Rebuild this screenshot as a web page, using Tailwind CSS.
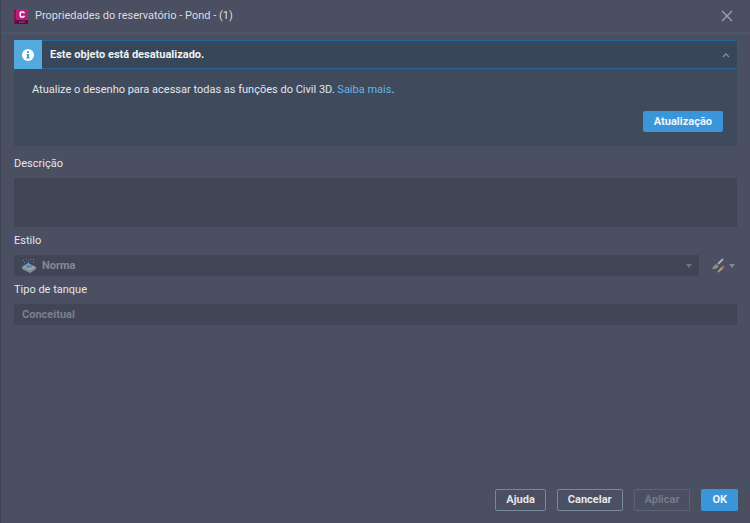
<!DOCTYPE html>
<html lang="pt-BR">

<head>
    <meta charset="UTF-8" />
    <meta name="viewport" content="width=device-width, initial-scale=1.0" />
    <script src="https://cdn.jsdelivr.net/npm/@tailwindcss/browser@4"></script>
    <title>Propriedades do reservatório</title>
</head>

<body class="bg-[#4a4f61] font-[Roboto,'Noto_Sans',sans-serif] text-[11px] leading-4 text-[#e4e6ea]">
    <div class="min-h-screen flex flex-col border-l border-[#3d4251]">
        <!-- title bar -->
        <header class="h-[34px] pl-[13px] pr-[17px] flex items-center border-b-2 border-[#4c5868]">
            <svg class="w-[14px] h-[15px] mr-[7px]" viewBox="0 0 14 15">
                <path d="M0 1l2-1v12l-2 2z" fill="#7c1553" />
                <path d="M2 0h12v11H2z" fill="#bd1a80" />
                <path d="M0 14l2-3h12v4H1z" fill="#5e0c40" />
                <path d="M10 4.2V3.7L9.2 3H7.1L6.3 3.8v3.4l.8.8h2.1l.8-.7v-.5" fill="none" stroke="#fff" stroke-width="1.6" />
                <path d="M5 13h6" stroke="#a8608b" stroke-dasharray="1.5 .6" />
            </svg>
            <h1 class="text-[#dcdee3]">Propriedades do reservatório - Pond - (1)</h1>
            <button class="ml-auto" aria-label="Fechar">
                <svg class="w-3 h-3" viewBox="0 0 12 12" fill="none" stroke="#a2a7b2" stroke-width="1.2">
                    <path d="M1 1l10 10M11 1L1 11" />
                </svg>
            </button>
        </header>

        <main class="pt-[6px] px-[13px] flex flex-col">
            <!-- update notice -->
            <section class="bg-[#3f4a5d] mb-[10px]">
                <div class="h-[29px] flex items-center bg-[#374659] border-y border-[#23649b]">
                    <div class="w-7 h-[29px] shrink-0 flex items-center justify-center bg-[#52aadf]">
                        <svg class="w-3 h-3" viewBox="0 0 12 12">
                            <circle cx="6" cy="6" r="6" fill="#fff" />
                            <path d="M5 2.3h2v1.6H5zM4.5 5H7v3.6h.8v1H4.3v-1H5V6h-.5z" fill="#4399d0" />
                        </svg>
                    </div>
                    <h2 class="ml-2 font-bold text-[#f0f2f4]">Este objeto está desatualizado.</h2>
                    <button class="ml-auto mr-[7px]" aria-label="Recolher">
                        <svg class="w-2 h-2" viewBox="0 0 8 8" fill="none" stroke="#7e8b9c" stroke-width="1.4">
                            <path d="M1 6l3-3 3 3" />
                        </svg>
                    </button>
                </div>
                <div class="pt-[13px] pb-[14px] pl-[18px] pr-[14px] flex flex-col gap-[13px]">
                    <p>Atualize o desenho para acessar todas as funções do Civil 3D. <a href="#" class="text-[#62b5ea]">Saiba mais</a>.</p>
                    <button class="self-end h-[21px] px-[11px] rounded-[2px] bg-[#3a95d9] font-bold text-[#eef5fb]">Atualização</button>
                </div>
            </section>

            <label for="description" class="mb-[6px]">Descrição</label>
            <textarea id="description" disabled class="h-[49px] mb-[6px] p-2 resize-none bg-[#404656]"></textarea>

            <label for="style" class="mb-[6px]">Estilo</label>
            <div class="mb-[6px] flex items-center">
                <div class="relative flex-1">
                    <select id="style" disabled class="block w-full h-[21px] pl-7 appearance-none bg-[#404656] font-bold text-[#838995] opacity-100">
                        <option>Norma</option>
                    </select>
                    <svg class="absolute left-2 top-1 w-[14px] h-[14px]" viewBox="0 0 14 14">
                        <path d="M0 8l6-4 8 4-6 4z" fill="#9aa5b3" />
                        <path d="M0 8l8 4v2L0 10z" fill="#8591a1" />
                        <path d="M8 12l6-4v2l-6 4z" fill="#a08e79" />
                        <ellipse cx="7" cy="7.2" rx="3.6" ry="1.8" fill="#548bb5" />
                        <path d="M1 1l1 1M4 0l1 1M8 1l1-1M12 0l-1 1M2 4l1-1M6 3h1M11 4l1-1" stroke="#638bae" />
                    </svg>
                    <svg class="absolute right-[7px] top-[9px] w-[6px] h-1" viewBox="0 0 6 4">
                        <path d="M0 0h6L3 4z" fill="#6c7685" />
                    </svg>
                </div>
                <button class="ml-3 mr-[2px] flex items-center gap-[3px]" aria-label="Editar estilo">
                    <svg class="w-[15px] h-[15px]" viewBox="0 0 15 15" fill="none">
                        <path d="M7 6l5-5" stroke="#a7adb7" stroke-width="2" />
                        <path d="M1 11c1-1 1-3 3-4 2-1 4 0 3 2-1 2-4 2-6 2z" fill="#9c8c75" />
                        <path d="M7 14l3-3" stroke="#8996a6" stroke-width="2" />
                        <path d="M9 12l3-3" stroke="#b59b66" stroke-width="2.4" />
                        <path d="M11 10l2-2" stroke="#a6606b" stroke-width="2.4" />
                    </svg>
                    <svg class="w-[6px] h-1" viewBox="0 0 6 4">
                        <path d="M0 0h6L3 4z" fill="#7f8795" />
                    </svg>
                </button>
            </div>

            <label for="type" class="mb-[6px]">Tipo de tanque</label>
            <input id="type" type="text" value="Conceitual" disabled class="h-[21px] px-2 bg-[#404656] font-bold text-[#7b818e]" />
        </main>

        <!-- dialog buttons -->
        <footer class="mt-auto pb-3 pr-3 flex justify-end gap-[11px] font-bold">
            <button class="h-[22px] px-[10px] rounded-[2px] border border-[#79879a]">Ajuda</button>
            <button class="h-[22px] px-[10px] rounded-[2px] border border-[#79879a]">Cancelar</button>
            <button disabled class="h-[22px] px-[10px] rounded-[2px] border border-[#5d6475] text-[#757b89]">Aplicar</button>
            <button class="h-[22px] px-[11px] rounded-[2px] bg-[#3a95d9] text-[#eef5fb]">OK</button>
        </footer>
    </div>
</body>

</html>
